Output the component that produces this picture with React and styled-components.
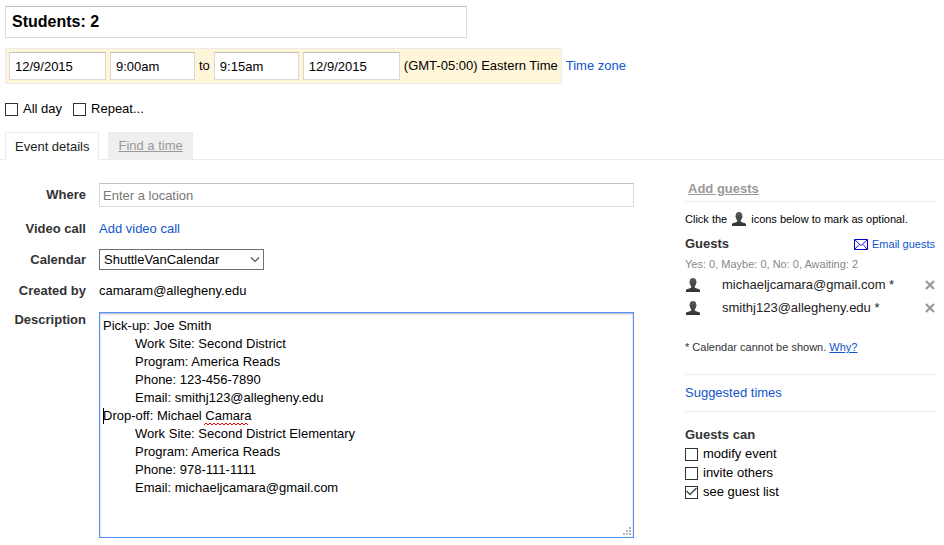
import React, { useState } from "react";
import styled, { createGlobalStyle } from "styled-components";

const GlobalStyle = createGlobalStyle`
  *, *::before, *::after { box-sizing: border-box; }
  body {
    margin: 0;
    background: #fff;
    color: #000;
    font: 13px/16px "Liberation Sans", Arial, sans-serif;
  }
  input, select, textarea, button { font: inherit; color: inherit; margin: 0; }
`;

const Page = styled.main`
  padding: 6px 0;
`;

const TextInput = styled.input`
  width: ${(p) => p.$width || "100%"};
  height: ${(p) => p.$height || "28px"};
  padding: 0 ${(p) => p.$pad || "5px"};
  border: 1px solid #d9d9d9;
  border-top-color: #c0c0c0;
  border-radius: 0;
  background: #fff;
  outline: none;
  &::placeholder { color: #777; opacity: 1; }
`;

const Header = styled.header`
  padding: 0 5px;
`;

const TitleInput = styled(TextInput)`
  display: block;
  max-width: 100%;
  font-size: 16px;
  font-weight: bold;
`;

const WhenRow = styled.div`
  display: flex;
  align-items: center;
  gap: 4px;
  margin-top: 10px;
  line-height: 18px;
`;

const WhenBand = styled.div`
  display: flex;
  align-items: center;
  gap: 4px;
  padding: 3px;
  border: 1px solid #ebebeb;
  background: #fff6d9;
  white-space: nowrap;
`;

const Link = styled.a`
  color: #15c;
  text-decoration: ${(p) => (p.$underline ? "underline" : "none")};
  white-space: nowrap;
`;

const Options = styled.div`
  display: flex;
  gap: 11px;
  margin-top: 17px;
`;

const CheckLabel = styled.label`
  display: flex;
  align-items: center;
  gap: 5px;
`;

const CheckBox = styled.input`
  appearance: none;
  flex: none;
  display: grid;
  place-items: center;
  width: 13px;
  height: 13px;
  border: 1px solid #333;
  background: #fff;
  &:checked::before {
    content: "";
    width: 11px;
    height: 11px;
    background: #444;
    clip-path: polygon(0 5px, 1px 4px, 4px 7px, 10px 1px, 11px 2px, 4px 9px);
  }
`;

const Tabs = styled.nav`
  display: flex;
  gap: 9px;
  margin-top: 15px;
  padding: 0 5px;
  border-bottom: 1px solid #ebebeb;
`;

const Tab = styled.button`
  height: ${(p) => (p.$active ? "28px" : "27px")};
  margin-bottom: ${(p) => (p.$active ? "-1px" : "0")};
  padding: 0 9px;
  border: 1px solid #ebebeb;
  border-bottom: 0;
  background: ${(p) => (p.$active ? "#fff" : "#efefef")};
  color: ${(p) => (p.$active ? "#222" : "#999")};
  text-decoration: ${(p) => (p.$active ? "none" : "underline")};
`;

const Columns = styled.div`
  display: grid;
  grid-template-columns: minmax(0, 1fr) 250px;
  gap: 51px;
  padding: 0 9px 0 5px;
`;

const Form = styled.form`
  display: grid;
  gap: 6px;
  align-content: start;
  padding-top: 23px;
`;

const Fields = styled.div`
  display: grid;
  grid-template-columns: 81px minmax(0, 1fr);
  grid-auto-rows: minmax(${(p) => p.$row || "24px"}, auto);
  column-gap: 13px;
  align-items: ${(p) => p.$align || "center"};
`;

const FieldLabel = styled.label`
  color: #333;
  font-weight: bold;
  text-align: right;
`;

const SelectWrap = styled.div`
  position: relative;
  width: 165px;
  height: 21px;
`;

const Select = styled.select`
  appearance: none;
  display: block;
  width: 100%;
  height: 100%;
  padding: 0 20px 0 4px;
  border: 1px solid #707070;
  border-radius: 0;
  background: #fff;
`;

const Chevron = styled.svg`
  position: absolute;
  right: 4px;
  top: 7px;
  pointer-events: none;
`;

const DescriptionBox = styled.div`
  position: relative;
`;

const Description = styled.textarea`
  display: block;
  width: 100%;
  height: 226px;
  padding: 4px 3px;
  border: 1px solid #4d90fe;
  box-shadow: inset 0 1px 2px rgba(0, 0, 0, 0.3);
  background: #fff;
  line-height: 18px;
  tab-size: 32px;
  resize: none;
  outline: none;
`;

const Overlay = styled.svg`
  position: absolute;
  left: ${(p) => p.$left};
  right: ${(p) => p.$right};
  top: ${(p) => p.$top};
  bottom: ${(p) => p.$bottom};
  pointer-events: none;
`;

const Sidebar = styled.aside`
  padding-top: 20px;
`;

const AddGuests = styled.button`
  display: block;
  width: 100%;
  height: 22px;
  padding: 0 3px 4px;
  border: 0;
  border-bottom: 1px solid #ebebeb;
  background: none;
  color: #999;
  font-weight: bold;
  text-align: left;
  text-decoration: underline;
`;

const Hint = styled.p`
  display: flex;
  align-items: center;
  gap: 4px;
  margin: 9px 0;
  font-size: 11px;
`;

const SectionHead = styled.div`
  display: flex;
  align-items: center;
  justify-content: space-between;
`;

const Heading = styled.h2`
  margin: 0;
  color: #333;
  font-size: 13px;
`;

const MailLink = styled(Link)`
  display: flex;
  align-items: center;
  gap: 4px;
  font-size: 11px;
`;

const Tally = styled.p`
  margin: 4px 0 1px;
  color: #888;
  font-size: 11px;
`;

const GuestList = styled.ul`
  margin: 0;
  padding: 0;
  list-style: none;
`;

const Guest = styled.li`
  display: grid;
  grid-template-columns: 37px 1fr 10px;
  align-items: center;
  height: 23px;
  color: #222;
`;

const IconButton = styled.button`
  display: flex;
  padding: 0;
  border: 0;
  background: none;
`;

const Note = styled.p`
  margin: 20px 0 19px;
  color: #333;
  font-size: 11px;
`;

const Suggested = styled.div`
  padding: 10px 0;
  border: solid #ebebeb;
  border-width: 1px 0;
`;

const Permissions = styled.section`
  display: grid;
  gap: 3px;
  margin-top: 15px;
`;

const Person = () => (
  <svg width="16" height="14" viewBox="0 0 16 14" aria-hidden="true">
    <defs>
      <linearGradient id="personShade" x1="0" y1="0" x2="0" y2="1">
        <stop offset="0" stopColor="#5a5a5a" />
        <stop offset="1" stopColor="#333" />
      </linearGradient>
    </defs>
    <path
      fill="url(#personShade)"
      d="M8 0c2.300 0 3.400 1.500 3.300 3.600.5.500.3 1.700-.3 2.100-.2 1.300-.7 2.100-1.300 2.700v1.200c.7 1 5.300 1.100 5.300 3V14H1v-1.400c0-1.900 4.600-2 5.300-3V8.400C5.700 7.800 5.200 7 5 5.700c-.6-.4-.8-1.600-.3-2.100C4.600 1.500 5.700 0 8 0z"
    />
  </svg>
);

const Envelope = () => (
  <svg width="14" height="11" viewBox="0 0 14 11" fill="none" stroke="#0000cc" aria-hidden="true">
    <path d="M.5.5h13v10H.5z" />
    <path d="M1 1l6 5.500L13 1M1 10l4-4.500M13 10L9 5.500" strokeWidth=".9" />
  </svg>
);

const Cross = () => (
  <svg width="10" height="10" viewBox="0 0 10 10" stroke="#999" strokeWidth="2.200" aria-hidden="true">
    <path d="M1 1l8 8M9 1L1 9" />
  </svg>
);

const NOTES = `Pick-up: Joe Smith
\tWork Site: Second District
\tProgram: America Reads
\tPhone: 123-456-7890
\tEmail: smithj123@allegheny.edu
Drop-off: Michael Camara
\tWork Site: Second District Elementary
\tProgram: America Reads
\tPhone: 978-111-1111
\tEmail: michaeljcamara@gmail.com`;

const GUESTS = ["michaeljcamara@gmail.com", "smithj123@allegheny.edu"];

function Check({ label, initial = false }) {
  const [on, setOn] = useState(initial);
  return (
    <CheckLabel>
      <CheckBox type="checkbox" checked={on} onChange={(e) => setOn(e.target.checked)} />
      {label}
    </CheckLabel>
  );
}

export default function App() {
  return (
    <Page>
      <GlobalStyle />
      <Header>
        <TitleInput $width="462px" $height="32px" $pad="6px" aria-label="Event title" defaultValue="Students: 2" />
        <WhenRow>
          <WhenBand>
            <TextInput $width="97px" aria-label="Start date" defaultValue="12/9/2015" />
            <TextInput $width="85px" aria-label="Start time" defaultValue="9:00am" />
            <span>to</span>
            <TextInput $width="85px" aria-label="End time" defaultValue="9:15am" />
            <TextInput $width="97px" aria-label="End date" defaultValue="12/9/2015" />
            <span>(GMT-05:00) Eastern Time</span>
          </WhenBand>
          <Link href="#timezone">Time zone</Link>
        </WhenRow>
        <Options>
          <Check label="All day" />
          <Check label="Repeat..." />
        </Options>
      </Header>
      <Tabs>
        <Tab type="button" $active>Event details</Tab>
        <Tab type="button">Find a time</Tab>
      </Tabs>
      <Columns>
        <Form>
          <Fields>
            <FieldLabel htmlFor="where">Where</FieldLabel>
            <TextInput id="where" $height="24px" $pad="3px" placeholder="Enter a location" />
          </Fields>
          <Fields $row="31px">
            <FieldLabel as="span">Video call</FieldLabel>
            <div><Link href="#video">Add video call</Link></div>
            <FieldLabel htmlFor="calendar">Calendar</FieldLabel>
            <SelectWrap>
              <Select id="calendar">
                <option>ShuttleVanCalendar</option>
              </Select>
              <Chevron width="10" height="7" viewBox="0 0 10 7" fill="none" stroke="#555" strokeWidth="1.2">
                <path d="M1 1.500l4 4 4-4" />
              </Chevron>
            </SelectWrap>
            <FieldLabel as="span">Created by</FieldLabel>
            <span>camaram@allegheny.edu</span>
          </Fields>
          <Fields $align="start">
            <FieldLabel htmlFor="description">Description</FieldLabel>
            <DescriptionBox>
              <Description id="description" spellCheck={false} defaultValue={NOTES} />
              <Overlay $left="105px" $top="110px" width="46" height="4" viewBox="0 0 46 4" fill="none" stroke="#f00">
                <path d="M0 3l2-2 2 2 2-2 2 2 2-2 2 2 2-2 2 2 2-2 2 2 2-2 2 2 2-2 2 2 2-2 2 2 2-2 2 2 2-2 2 2 2-2 2 2" />
              </Overlay>
              <Overlay $left="4px" $top="96px" width="1" height="16">
                <path d="M0 0h1v16H0z" />
              </Overlay>
              <Overlay $right="3px" $bottom="3px" width="8" height="8" fill="#b8b8b8">
                <path d="M6 0h2v2H6zM3 3h2v2H3zM6 3h2v2H6zM0 6h2v2H0zM3 6h2v2H3zM6 6h2v2H6z" />
              </Overlay>
            </DescriptionBox>
          </Fields>
        </Form>
        <Sidebar>
          <AddGuests type="button">Add guests</AddGuests>
          <Hint>
            <span>Click the</span>
            <Person />
            <span>icons below to mark as optional.</span>
          </Hint>
          <SectionHead>
            <Heading>Guests</Heading>
            <MailLink href="#email"><Envelope />Email guests</MailLink>
          </SectionHead>
          <Tally>Yes: 0, Maybe: 0, No: 0, Awaiting: 2</Tally>
          <GuestList>
            {GUESTS.map((email) => (
              <Guest key={email}>
                <IconButton type="button" aria-label={`Mark ${email} optional`}><Person /></IconButton>
                <span>{email} *</span>
                <IconButton type="button" aria-label={`Remove ${email}`}><Cross /></IconButton>
              </Guest>
            ))}
          </GuestList>
          <Note>* Calendar cannot be shown. <Link href="#why" $underline>Why?</Link></Note>
          <Suggested><Link href="#suggested">Suggested times</Link></Suggested>
          <Permissions>
            <Heading>Guests can</Heading>
            <Check label="modify event" />
            <Check label="invite others" />
            <Check label="see guest list" initial />
          </Permissions>
        </Sidebar>
      </Columns>
    </Page>
  );
}
